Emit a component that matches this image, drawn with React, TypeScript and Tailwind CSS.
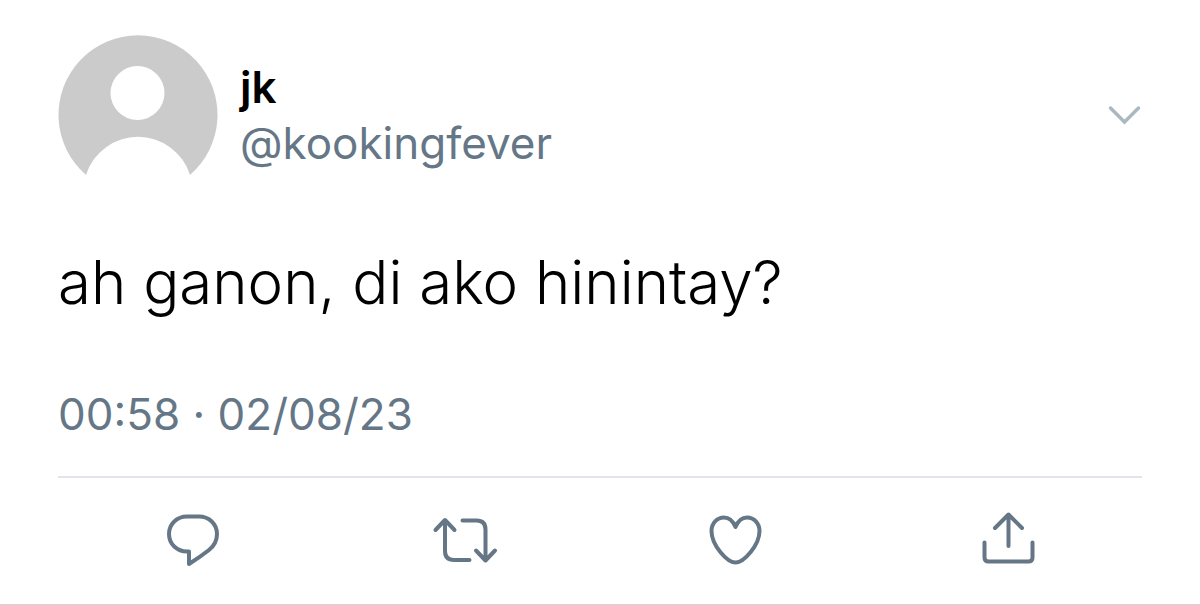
import type { ReactNode } from "react";

function Avatar() {
  return (
    <svg viewBox="0 0 160 160" className="size-40 shrink-0" role="img" aria-label="Profile picture of jk">
      <path
        fillRule="evenodd"
        fill="#cbcbcb"
        d="M28 140A79.500 79.500 0 1 1 132 140A54.500 54.500 0 0 0 28 140ZM79.500 31A27 27 0 1 0 79.500 85A27 27 0 1 0 79.500 31Z"
      />
    </svg>
  );
}

function Action({ label, children }: { label: string; children: ReactNode }) {
  return (
    <button type="button" aria-label={label} className="flex items-center justify-center">
      <svg
        viewBox="0 0 64 64"
        className="size-16 overflow-visible"
        fill="none"
        stroke="currentColor"
        strokeWidth="4"
        strokeLinecap="round"
        strokeLinejoin="round"
        aria-hidden="true"
      >
        {children}
      </svg>
    </button>
  );
}

export default function App() {
  return (
    <main className="border-b border-[#d0d4d9] bg-white font-['Inter',sans-serif] text-[#657786]">
      <article className="px-[58px] pt-[35px] pb-8">
        <header className="flex items-center gap-[22px]">
          <Avatar />
          <div className="min-w-0 flex-1 text-[44px] leading-14">
            <h1 className="font-semibold text-black">jk</h1>
            <a href="#profile">@kookingfever</a>
          </div>
          <button type="button" aria-label="More options">
            <svg
              viewBox="0 0 34 20"
              className="h-5 w-[34px]"
              fill="none"
              stroke="#aab8c2"
              strokeWidth="3.500"
              strokeLinecap="round"
              strokeLinejoin="miter"
              aria-hidden="true"
            >
              <path d="M2.500 3L16.500 17L30.500 3" />
            </svg>
          </button>
        </header>
        <p className="mt-[47px] text-[60px] leading-20 font-light text-black">ah ganon, di ako hinintay?</p>
        <time className="mt-16 block text-[44px] leading-14">00:58 · 02/08/23</time>
        <div className="mt-[34px] grid grid-cols-4 border-t-2 border-[#e1e5e9] pt-[30px]">
          <Action label="Reply">
            <path d="M25 8.500H37C47 8.500 55 16 55 26C55 32.500 52 38 47 42Q38 49 27 56V43.500H25C15 43.500 7 36 7 26C7 16 15 8.500 25 8.500Z" />
          </Action>
          <Action label="Retweet">
            <path d="M2.500 22L12 12L21.500 22M12 13V43Q12 52 21 52H36.500M29.500 12.500H43.500Q52.500 12.500 52.500 21.500V52M43 42.500L52.500 52.500L62 42.500" />
          </Action>
          <Action label="Like">
            <path d="M31.500 19C29 13 25 9.500 20 9.500C13 9.500 7.500 15.500 7.500 23C7.500 37 23 54.500 31.500 54.500C40 54.500 55.500 37 55.500 23C55.500 15.500 50 9.500 43 9.500C38 9.500 34 13 31.500 19Z" />
          </Action>
          <Action label="Share">
            <path d="M33.500 38V6.500M20 20L33.500 6.500L47 20M9.500 34.500V49.500Q9.500 53.500 13.500 53.500H53.500Q57.500 53.500 57.500 49.500V34.500" />
          </Action>
        </div>
      </article>
    </main>
  );
}
